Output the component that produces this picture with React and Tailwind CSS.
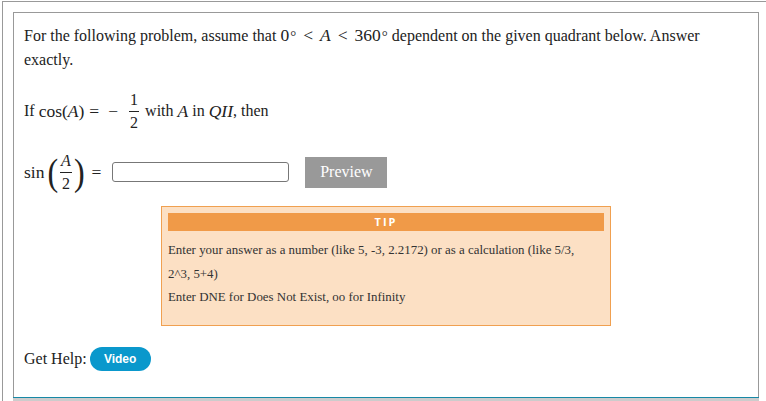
import React from 'react';

// Inline math pieces, rendered as plain text in a slightly larger serif
const Mi = ({ children }) => <span className="italic">{children}</span>;
const Rel = ({ children, className = 'mx-[7px]' }) => <span className={className}>{children}</span>;
const Deg = () => <span className="text-[15px] ml-[1px]">°</span>;

function Frac({ num, den }) {
  return (
    <span className="inline-flex flex-col items-center align-middle mx-[2px] leading-none text-[16px]">
      <span className="px-[1px]">{num}</span>
      <span className="block w-full h-px bg-[#222] my-[3px]" />
      <span className="px-[1px]">{den}</span>
    </span>
  );
}

function TipBox() {
  return (
    <div className="ml-[137px] mt-[14px] w-[450px] h-[120px] border border-[#f0a050] bg-[#fce0c4] px-[6px] pt-[6px]">
      <div className="bg-[#f09a48] h-[18px] flex items-center justify-center text-white text-[11px] font-bold tracking-[2px] font-['Open_Sans',sans-serif]">
        TIP
      </div>
      <div className="text-[12.9px] leading-[23.5px] text-[#333] mt-[8px]">
        <div>Enter your answer as a number (like 5, -3, 2.2172) or as a calculation (like 5/3,</div>
        <div>2^3, 5+4)</div>
        <div>Enter DNE for Does Not Exist, oo for Infinity</div>
      </div>
    </div>
  );
}

export default function App() {
  return (
    <div className="w-[766px] h-[401px] overflow-hidden bg-white font-['Liberation_Serif',serif] text-[#222]">
      <div className="mt-px ml-[2px] border-t border-l border-[#999] pl-[10px] pt-[10px]">
        <div className="w-[746px]">
          {/* Problem box */}
          <div className="h-[385px] border-t border-l border-r border-[#999] px-[10px] pt-[10px]">
            <p className="text-[16px] leading-[24px] pr-[40px]">
              <span>For the following problem, assume that </span>
              <span className="text-[17.5px] leading-[24px]">
                0<Deg />
                <Rel>&lt;</Rel>
                <Mi>A</Mi>
                <Rel>&lt;</Rel>
                360<Deg />
              </span>
              <span> dependent on the given quadrant below. Answer exactly.</span>
            </p>

            <p className="mt-[19px] text-[16px] flex items-center h-[40px]">
              <span>If&nbsp;</span>
              <span className="text-[17.5px]">
                cos(<Mi>A</Mi>)
              </span>
              <Rel className="mx-[5px]">
                <span className="text-[17.5px]">=</span>
              </Rel>
              <span className="text-[17.5px] ml-[4px] mr-[9px]">−</span>
              <Frac num="1" den="2" />
              <span>&nbsp;with&nbsp;</span>
              <span className="text-[17.5px]">
                <Mi>A</Mi>
              </span>
              <span>&nbsp;in&nbsp;</span>
              <span className="text-[17.5px]">
                <Mi>QII</Mi>
              </span>
              <span>, then</span>
            </p>

            <div className="mt-[21px] flex items-center text-[16px] h-[40px]">
              <span className="text-[17.5px]">sin</span>
              <span className="inline-block ml-[3px] text-[32px] font-light leading-none scale-y-[1.2]">(</span>
              <Frac num={<Mi>A</Mi>} den="2" />
              <span className="inline-block text-[32px] font-light leading-none scale-y-[1.2]">)</span>
              <Rel className="ml-[7px] mr-[10px]">
                <span className="text-[17.5px]">=</span>
              </Rel>
              <input
                type="text"
                className="ml-[1px] w-[177px] h-[20px] border border-[#777] rounded-[3px] bg-white outline-none"
              />
              <button className="ml-[16px] w-[82px] h-[31px] bg-[#999] text-white text-[16px] font-['Liberation_Serif',serif]">
                Preview
              </button>
            </div>

            <TipBox />

            <div className="mt-[21px] flex items-center text-[16px]">
              <span>Get Help:</span>
              <button className="ml-[3px] h-[24px] w-[61px] rounded-full bg-[#0a98cc] text-white text-[12px] font-bold font-['Liberation_Sans',sans-serif]">
                Video
              </button>
            </div>
          </div>
          <div className="h-[10px] border-t border-[#1688a6] bg-[#cccccc]" />
        </div>
      </div>
    </div>
  );
}
